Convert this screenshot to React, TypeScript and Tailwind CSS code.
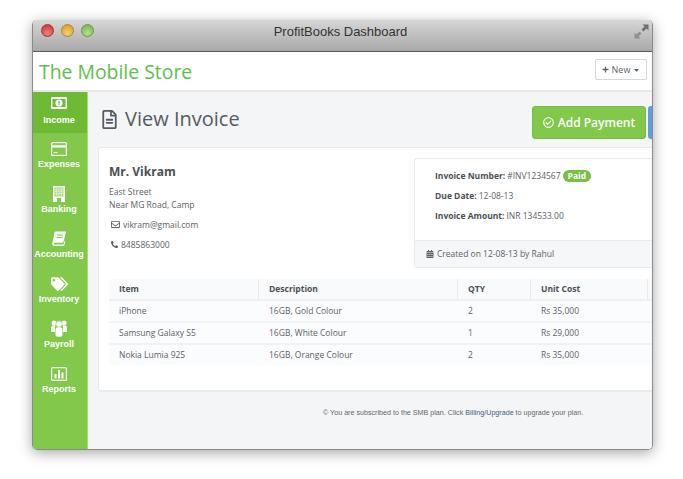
import { ReactNode } from 'react';
import {
  FaRegFileAlt,
  FaPlus,
  FaCaretDown,
  FaRegCheckCircle,
  FaRegEnvelope,
  FaPhoneAlt,
  FaCalendarAlt,
  FaTags,
} from 'react-icons/fa';

const MoneyIcon = () => (
  <svg width="16" height="12" viewBox="0 0 16 12">
    <rect x="0" y="0" width="16" height="12" rx="1" fill="#fff" />
    <rect x="1.5" y="2" width="13" height="8" fill="#6fba35" />
    <circle cx="8" cy="6" r="3.6" fill="#fff" />
    <rect x="7.4" y="3.8" width="1.2" height="4.4" fill="#6fba35" />
  </svg>
);

const CardIcon = () => (
  <svg width="16" height="14" viewBox="0 0 16 14">
    <rect x="0" y="0" width="16" height="14" rx="1.5" fill="#fff" />
    <rect x="1.2" y="1.2" width="13.6" height="2" fill="#82c84a" />
    <rect x="1.2" y="5.6" width="13.6" height="7.2" fill="#82c84a" />
    <rect x="2.5" y="10" width="4" height="1" fill="#fff" />
  </svg>
);

const BuildingIcon = () => (
  <svg width="12" height="16" viewBox="0 0 12 16">
    <rect x="0" y="0" width="12" height="16" fill="#fff" />
    <rect x="1.5" y="1.5" width="9" height="9" fill="#a6da7e" />
    <path d="M1.5 3.5h9M1.5 5.5h9M1.5 7.5h9M3.5 1.5v9M6 1.5v9M8.5 1.5v9" stroke="#e4f4d8" strokeWidth="0.7" />
    <rect x="4" y="12" width="4" height="4" fill="#82c84a" />
  </svg>
);

const BookIcon = () => (
  <svg width="14" height="15" viewBox="0 0 14 15">
    <path d="M3.6 0.5h9.9c.5 0 .6.4.5.8L11.4 11c-.1.5-.4.8-1 .8H2.6c-.6 0-.9.4-.9.8s.3.9.9.9h9l.9-3.4.9.4-1 3.6c-.1.5-.4.8-.9.8H2.4C1 14.9 0 13.800 0.300 12.300L2.500 1.500c.1-.6.5-1 1.100-1z" fill="#fff" />
    <path d="M5 4h6M4.500 6.500h6" stroke="#82c84a" strokeWidth="1" />
  </svg>
);

const UsersIcon = () => (
  <svg width="16" height="17" viewBox="0 0 16 17">
    <circle cx="3" cy="3" r="2.500" fill="#fff" />
    <circle cx="13" cy="3" r="2.500" fill="#fff" />
    <circle cx="8" cy="4" r="3.200" fill="#fff" stroke="#82c84a" strokeWidth="0.6" />
    <path d="M0 11V8c0-1.500 1-2.400 2-2.400h2.500C4 6.500 4 7.500 4 9v3H1c-.6 0-1-.4-1-1zM16 11V8c0-1.500-1-2.400-2-2.400h-2.500c.5.9.5 1.900.5 3.400v3h3c.6 0 1-.4 1-1z" fill="#fff" />
    <path d="M4.500 15V10c0-1.800 1-2.800 2-2.800h3c1 0 2 1 2 2.800v5c0 1.200-1 1.800-3.500 1.800s-3.500-.6-3.500-1.800z" fill="#fff" />
  </svg>
);

const ReportsIcon = () => (
  <svg width="16" height="14" viewBox="0 0 16 14">
    <rect x="0.600" y="0.600" width="14.800" height="12.800" rx="1" fill="none" stroke="#fff" strokeWidth="1.200" />
    <path d="M3.500 7h2v4.500h-2zM7 3h2v8.500H7zM10.500 5.500h2v6h-2z" fill="#fff" />
  </svg>
);

const NAV: { label: string; icon: ReactNode; active?: boolean }[] = [
  { label: 'Income', icon: <MoneyIcon />, active: true },
  { label: 'Expenses', icon: <CardIcon /> },
  { label: 'Banking', icon: <BuildingIcon /> },
  { label: 'Accounting', icon: <BookIcon /> },
  { label: 'Inventory', icon: <FaTags className="h-[16px] w-[17px] text-white" /> },
  { label: 'Payroll', icon: <UsersIcon /> },
  { label: 'Reports', icon: <ReportsIcon /> },
];

const ROWS = [
  ['iPhone', '16GB, Gold Colour', '2', 'Rs 35,000'],
  ['Samsung Galaxy S5', '16GB, White Colour', '1', 'Rs 29,000'],
  ['Nokia Lumia 925', '16GB, Orange Colour', '2', 'Rs 35,000'],
];

const Sidebar = () => (
  <div className="w-[55px] shrink-0 border-r border-[#a4dc76] bg-[#82c84a] font-['Liberation_Sans',sans-serif]">
    {NAV.map((item) => (
      <div
        key={item.label}
        className={`flex flex-col items-center pr-[2px] text-[9px] font-bold text-white ${
          item.active ? 'h-[41px] bg-[#6fba35] pt-[2px]' : 'h-[45px] pt-[7px]'
        }`}
      >
        <div className="flex h-[17px] items-center">{item.icon}</div>
        <div className={`leading-[11px] ${item.active ? 'mt-[4px]' : 'mt-[2px]'}`}>{item.label}</div>
      </div>
    ))}
  </div>
);

export default function App() {
  return (
    <div className="h-[479px] w-[683px] overflow-hidden bg-white pl-[32px] pt-[20px] font-['Open_Sans',sans-serif]">
      <div className="flex h-[430px] w-[621px] flex-col overflow-hidden rounded-[5px] border-x border-b border-[#8a8a8a] shadow-[0_3px_14px_rgba(0,0,0,0.35)]">
        {/* title bar */}
        <div className="relative flex h-[32px] shrink-0 items-center justify-center border-b border-[#5c5c5c] bg-gradient-to-b from-[#d6d6d6] to-[#a9a9a9] pb-[7px] pr-[4px]">
          <div className="absolute left-[8px] top-[4px] flex gap-[7px]">
            <span className="h-[13px] w-[13px] rounded-full border border-[#a33] bg-[radial-gradient(circle_at_50%_75%,#f08080,#c92a2a)]" />
            <span className="h-[13px] w-[13px] rounded-full border border-[#b5852a] bg-[radial-gradient(circle_at_50%_75%,#f7cf76,#d9951f)]" />
            <span className="h-[13px] w-[13px] rounded-full border border-[#6a9a4a] bg-[radial-gradient(circle_at_50%_75%,#b5e08f,#6fae45)]" />
          </div>
          <span className="font-['Liberation_Sans',sans-serif] text-[13px] text-[#333]">ProfitBooks Dashboard</span>
          <svg width="15" height="15" viewBox="0 0 15 15" className="absolute right-[3px] top-[4px]">
            <path d="M8.500 0.500h6v6l-2-2-3 3-2-2 3-3z" fill="#6f6f6f" />
            <path d="M6.500 14.500h-6v-6l2 2 3-3 2 2-3 3z" fill="#8f8f8f" />
          </svg>
        </div>

        {/* app header */}
        <div className="flex h-[40px] shrink-0 items-center justify-between border-b-2 border-[#e6e8ea] bg-white pl-[6px] pr-[5px]">
          <span className="mt-[1px] text-[19.4px] text-[#5cc04a]">The Mobile Store</span>
          <div className="mb-[3px] flex h-[21px] w-[52px] items-center justify-center gap-[3px] rounded-[2px] border border-[#d5d8da] text-[9px] text-[#59636b]">
            <FaPlus className="h-[7px] w-[7px]" />
            New
            <FaCaretDown className="h-[8px] w-[7px]" />
          </div>
        </div>

        <div className="flex min-h-0 flex-1">
          <Sidebar />

          <div className="min-w-0 flex-1 bg-[#f4f5f7] pl-[10px]">
            {/* page heading */}
            <div className="flex h-[55px] items-start justify-between">
              <div className="mt-[13px] flex items-center gap-[8px] pl-[4px] text-[#555b63]">
                <FaRegFileAlt className="h-[19px] w-[15px]" />
                <span className="text-[20px] leading-[28px]">View Invoice</span>
              </div>
              <div className="mt-[14px] flex">
                <div className="flex h-[33px] w-[114px] items-center justify-center gap-[4px] rounded-[3px] border border-[#78bb42] bg-[#82c84a] text-[12px] font-semibold text-white">
                  <FaRegCheckCircle className="h-[11px] w-[11px]" />
                  Add Payment
                </div>
                <div className="ml-[2px] h-[33px] w-[4px] rounded-l-[3px] bg-[#5b9fdf]" />
              </div>
            </div>

            {/* invoice card */}
            <div className="h-[245px] overflow-hidden rounded-l-[3px] border-b-2 border-l border-t border-[#e8eaec] bg-white">
              <div className="flex h-[131px] justify-between">
                <div className="pl-[10px] pt-[16px] text-[#5c6166]">
                  <div className="text-[12px] font-bold leading-[16px] text-[#4a4f54]">Mr. Vikram</div>
                  <div className="mt-[5px] text-[8.5px] leading-[13px]">
                    East Street
                    <br />
                    Near MG Road, Camp
                  </div>
                  <div className="mt-[7px] flex items-center gap-[3px] pl-[2px] text-[8.5px] leading-[13px]">
                    <FaRegEnvelope className="h-[9px] w-[9px]" />
                    vikram@gmail.com
                  </div>
                  <div className="mt-[7px] flex items-center gap-[3px] pl-[2px] text-[8.5px] leading-[13px]">
                    <FaPhoneAlt className="h-[7px] w-[7px]" />
                    8485863000
                  </div>
                </div>
                <div className="mt-[10px] h-[110px] w-[238px] rounded-l-[3px] border-b border-l border-t border-[#e8eaec] text-[8.5px] text-[#5c6166]">
                  <div className="h-[81px] pl-[20px] pt-[7px]">
                    <div className="flex h-[20px] items-center gap-[2px]">
                      <b className="text-[#4a4f54]">Invoice Number:</b> #INV1234567
                      <span className="rounded-full bg-[#76c043] px-[5px] text-[8.5px] font-bold leading-[12px] text-white">Paid</span>
                    </div>
                    <div className="flex h-[20px] items-center gap-[2px]">
                      <b className="text-[#4a4f54]">Due Date:</b> 12-08-13
                    </div>
                    <div className="flex h-[20px] items-center gap-[2px]">
                      <b className="text-[#4a4f54]">Invoice Amount:</b> INR 134533.00
                    </div>
                  </div>
                  <div className="flex h-[27px] items-center gap-[3px] border-t border-[#e8eaec] bg-[#f6f7f9] pl-[11px]">
                    <FaCalendarAlt className="h-[8px] w-[8px]" />
                    Created on 12-08-13 by Rahul
                  </div>
                </div>
              </div>

              {/* items table */}
              <div className="ml-[10px] text-[8.5px] text-[#5c6166]">
                <div className="flex h-[22px] items-center border-b-2 border-[#eef0f2] bg-[#f9fafc] font-bold text-[#4a4f54]">
                  <div className="flex h-full w-[150px] items-center border-r border-[#e8eaec] pl-[10px]">Item</div>
                  <div className="flex h-full w-[199px] items-center border-r border-[#e8eaec] pl-[10px]">Description</div>
                  <div className="flex h-full w-[73px] items-center border-r border-[#e8eaec] pl-[10px]">QTY</div>
                  <div className="flex h-full w-[117px] items-center border-r border-[#e8eaec] pl-[10px]">Unit Cost</div>
                </div>
                {ROWS.map((row, i) => (
                  <div key={row[0]} className={`flex h-[22px] items-center border-b-2 bg-[#fbfcfd] ${i < 2 ? 'border-[#f0f2f4]' : 'border-white'}`}>
                    <div className="w-[150px] pl-[10px]">{row[0]}</div>
                    <div className="w-[199px] pl-[10px]">{row[1]}</div>
                    <div className="w-[73px] pl-[10px]">{row[2]}</div>
                    <div className="w-[117px] pl-[10px]">{row[3]}</div>
                  </div>
                ))}
              </div>
            </div>

            {/* footer note */}
            <div className="ml-[225px] mt-[16px] whitespace-nowrap font-['Liberation_Sans',sans-serif] text-[7.15px] text-[#666]">
              © You are subscribed to the SMB plan. Click <span className="text-[#3f5f7f]">Billing/Upgrade</span> to upgrade your plan.
            </div>
          </div>
        </div>
      </div>
    </div>
  );
}
